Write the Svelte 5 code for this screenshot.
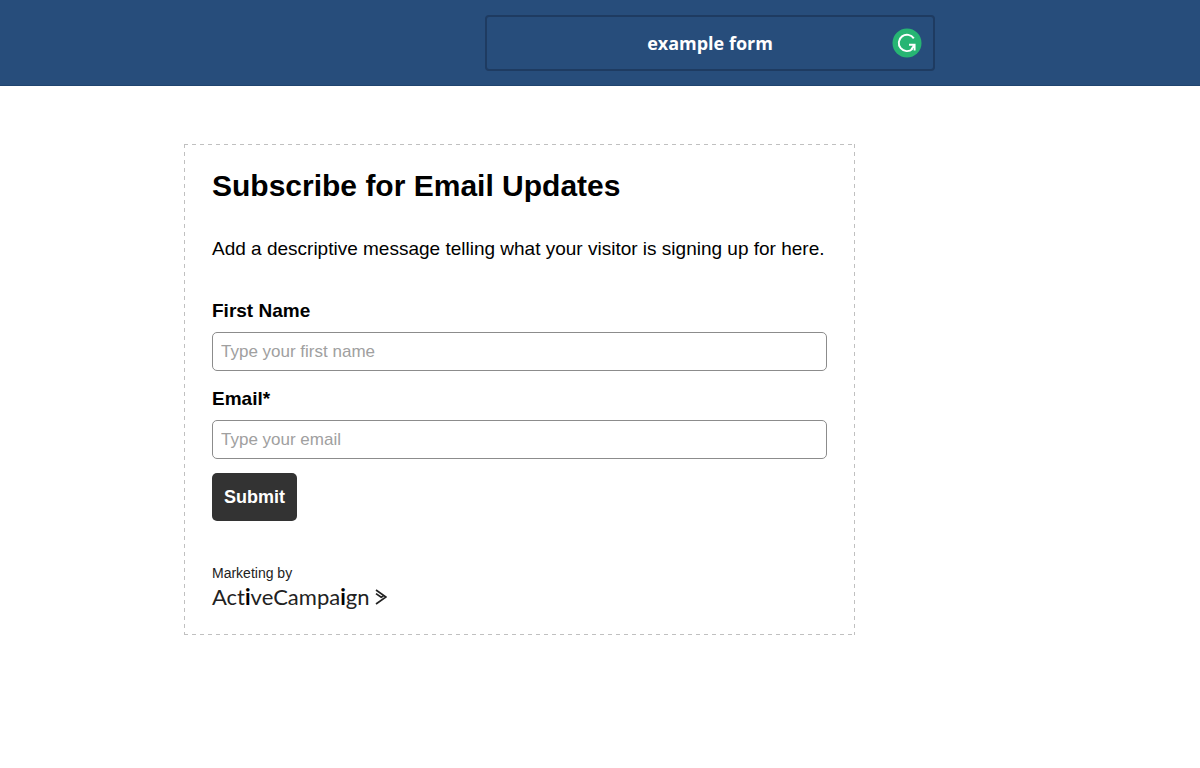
<script>
  let title = $state('example form');
  let firstName = $state('');
  let email = $state('');

  function submit(e) {
    e.preventDefault();
  }
</script>

<header class="topbar">
  <div class="title-box">
    <input class="title-input" type="text" aria-label="Form name" bind:value={title} />
    <svg class="checker" viewBox="0 0 30 30" aria-hidden="true">
      <circle cx="15" cy="15" r="14.5" fill="#27b573" />
      <path
        d="M21.8 10.4A8.2 8.2 0 1 0 20.6 20.9M17 16.8H22.6V22.6M22.6 16.8L19.4 21.4"
        fill="none"
        stroke="#fff"
        stroke-width="1.9"
      />
    </svg>
  </div>
</header>

<main class="canvas">
  <form class="form" onsubmit={submit}>
    <h1>Subscribe for Email Updates</h1>
    <p class="message">Add a descriptive message telling what your visitor is signing up for here.</p>

    <div class="field">
      <label for="first-name">First Name</label>
      <input id="first-name" type="text" placeholder="Type your first name" bind:value={firstName} />
    </div>
    <div class="field">
      <label for="email">Email*</label>
      <input id="email" type="text" placeholder="Type your email" bind:value={email} />
    </div>
    <button class="submit" type="submit">Submit</button>

    <div class="branding">
      <div class="marketing">Marketing by</div>
      <a class="brand" href="#activecampaign">
        <span>Act<b>i</b>veCampa<b>i</b>gn</span>
        <svg class="brand-mark" viewBox="0 0 12 16" aria-hidden="true">
          <path d="M1 1L11 8L1 15M1 4.6L6.2 8.3L8.2 7" fill="none" stroke="#222" stroke-width="1.7" />
        </svg>
      </a>
    </div>
  </form>
</main>

<style>
  :global(body) {
    margin: 0;
    background: #fff;
  }
  .topbar {
    background: #274d7b;
    border-bottom: 1px solid #20446f;
    padding: 15px 265px 14px 485px;
  }
  .title-box {
    display: flex;
    align-items: center;
    box-sizing: border-box;
    height: 56px;
    padding: 0 11px;
    border: 2px solid #1e3b61;
    border-radius: 4px;
  }
  .title-input {
    flex: 1;
    min-width: 0;
    padding: 0 0 0 30px;
    border: 0;
    outline: 0;
    background: none;
    color: #fff;
    font: bold 18px/28px "Open Sans", sans-serif;
    text-align: center;
  }
  .checker {
    width: 30px;
    height: 30px;
  }
  .canvas {
    padding: 58px 345px 58px 184px;
    font-family: "Liberation Sans", Arial, sans-serif;
    color: #000;
  }
  /* wide 4px dashes, which border-style: dashed can't do at 1px */
  .form {
    --h: repeating-linear-gradient(90deg, #c0c0c0 0 4px, transparent 4px 8px);
    --v: repeating-linear-gradient(180deg, #c0c0c0 0 4px, transparent 4px 8px);
    padding: 24px 28px;
    background: var(--h) top / 100% 1px no-repeat, var(--h) bottom / 100% 1px no-repeat,
      var(--v) left / 1px 100% no-repeat, var(--v) right / 1px 100% no-repeat;
  }
  h1 {
    margin: 0;
    font-size: 30px;
    line-height: 36px;
  }
  .message {
    margin: 32px 0 35px;
    font-size: 19px;
    line-height: 26px;
  }
  .field {
    margin-bottom: 14px;
  }
  label {
    display: block;
    margin-bottom: 7px;
    font-size: 19px;
    font-weight: bold;
    line-height: 28px;
  }
  .field input {
    display: block;
    box-sizing: border-box;
    width: 100%;
    height: 39px;
    padding: 0 8px;
    border: 1px solid #8c8c8c;
    border-radius: 5px;
    font: 17px "Liberation Sans", Arial, sans-serif;
  }
  .field input::placeholder {
    color: #a0a0a0;
  }
  .submit {
    display: block;
    height: 48px;
    padding: 0 12px;
    border: 0;
    border-radius: 5px;
    background: #333;
    color: #fff;
    font: bold 18px "Liberation Sans", Arial, sans-serif;
    cursor: pointer;
  }
  .branding {
    margin-top: 42px;
    color: #222;
  }
  .marketing {
    font-size: 14px;
    line-height: 20px;
  }
  .brand {
    display: flex;
    align-items: center;
    gap: 6px;
    color: #222;
    font: 22px/28px Lato, sans-serif;
    text-decoration: none;
  }
  .brand b {
    color: #000;
  }
  .brand-mark {
    width: 12px;
    height: 16px;
  }
</style>
